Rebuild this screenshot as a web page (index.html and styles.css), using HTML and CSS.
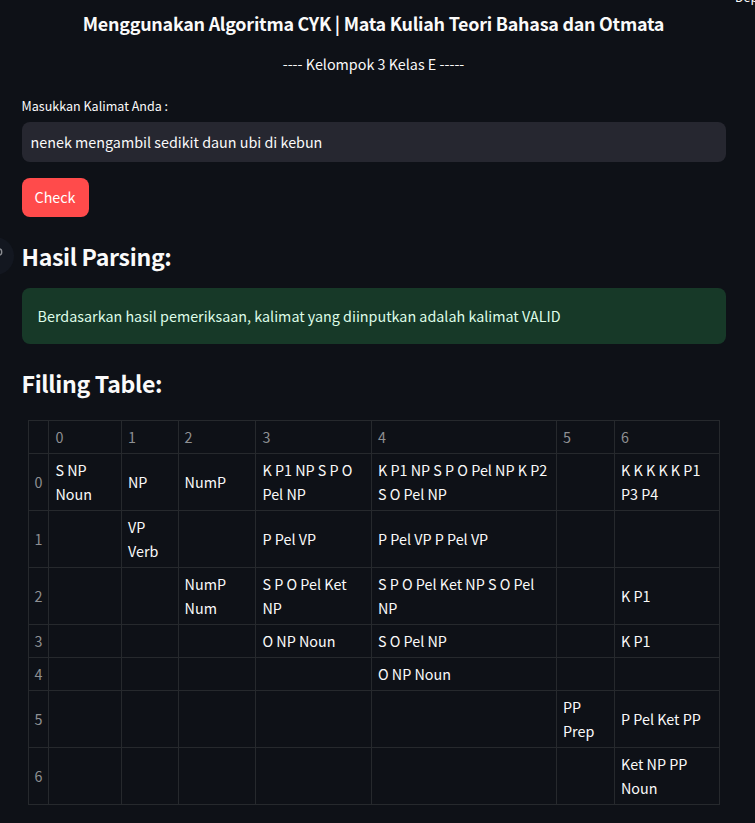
FILE: index.html
```html
<!DOCTYPE html>
<html lang="id">
<head>
<meta charset="utf-8">
<title>Algoritma CYK</title>
<link rel="stylesheet" href="styles.css">
</head>
<body>
<div class="deploy">Deploy</div>
<div class="side-toggle"><svg width="19" height="38" viewBox="0 0 19 38"><ellipse cx="-0.8" cy="15" rx="2.5" ry="3" fill="none" stroke="#8b8d92" stroke-width="1.4"/></svg></div>
<main class="page">
  <h4 class="title">Menggunakan Algoritma CYK | Mata Kuliah Teori Bahasa dan Otmata</h4>
  <p class="group">---- Kelompok 3 Kelas E -----</p>
  <label class="label" for="kalimat">Masukkan Kalimat Anda :</label>
  <input class="field" id="kalimat" type="text" value="nenek mengambil sedikit daun ubi di kebun">
  <button class="check">Check</button>
  <h3 class="heading">Hasil Parsing:</h3>
  <div class="alert">Berdasarkan hasil pemeriksaan, kalimat yang diinputkan adalah kalimat VALID</div>
  <h3 class="heading">Filling Table:</h3>
  <table class="grid">
    <colgroup><col class="c-idx"><col class="c0"><col class="c1"><col class="c2"><col class="c3"><col class="c4"><col class="c5"><col class="c6"></colgroup>
    <tr><th></th><th>0</th><th>1</th><th>2</th><th>3</th><th>4</th><th>5</th><th>6</th></tr>
    <tr><th>0</th><td>S NP<br>Noun</td><td>NP</td><td>NumP</td><td>K P1 NP S P O<br>Pel NP</td><td>K P1 NP S P O Pel NP K P2<br>S O Pel NP</td><td></td><td>K K K K K P1<br>P3 P4</td></tr>
    <tr><th>1</th><td></td><td>VP<br>Verb</td><td></td><td>P Pel VP</td><td>P Pel VP P Pel VP</td><td></td><td></td></tr>
    <tr><th>2</th><td></td><td></td><td>NumP<br>Num</td><td>S P O Pel Ket<br>NP</td><td>S P O Pel Ket NP S O Pel<br>NP</td><td></td><td>K P1</td></tr>
    <tr><th>3</th><td></td><td></td><td></td><td>O NP Noun</td><td>S O Pel NP</td><td></td><td>K P1</td></tr>
    <tr><th>4</th><td></td><td></td><td></td><td></td><td>O NP Noun</td><td></td><td></td></tr>
    <tr><th>5</th><td></td><td></td><td></td><td></td><td></td><td>PP<br>Prep</td><td>P Pel Ket PP</td></tr>
    <tr><th>6</th><td></td><td></td><td></td><td></td><td></td><td></td><td>Ket NP PP<br>Noun</td></tr>
  </table>
</main>
</body>
</html>
```
FILE: styles.css
```css
* { box-sizing: border-box; }
html { overflow: hidden; }
body {
  margin: 0;
  height: 823px;
  overflow: hidden;
  position: relative;
  background: #0e1117;
  color: #fafafa;
  font: 400 14.33px/24px "Noto Sans CJK SC", "Noto Sans", sans-serif;
}
.deploy {
  position: absolute;
  left: 735px;
  top: -14px;
  font-size: 12.54px;
  line-height: 22px;
}
.side-toggle {
  position: absolute;
  left: -24px;
  top: 237px;
  width: 38px;
  height: 38px;
  border-radius: 50%;
  background: #131720;
}
.side-toggle svg { display: block; margin-left: 24px; overflow: hidden; }
.page {
  display: flex;
  flex-direction: column;
  align-items: flex-start;
  padding: 11px 29px 0 22px;
}
.title {
  align-self: stretch;
  margin: 0 1px 0 0;
  text-align: center;
  font-size: 17.92px;
  line-height: 24px;
  font-weight: 700;
  letter-spacing: -0.245px;
  white-space: nowrap;
}
.group { align-self: stretch; margin: 17px 1px 0 0; text-align: center; }
.label { margin: 19px 0 0 -0.4px; font-size: 12.54px; line-height: 22px; }
.field {
  width: 704px;
  height: 40px;
  margin-top: 5px;
  padding: 0 9px 2px 8.6px;
  border: 0;
  border-radius: 8px;
  background: #262730;
  color: #fafafa;
  font: inherit;
  outline: none;
}
.check {
  width: 67px;
  height: 39px;
  margin-top: 16px;
  padding: 0 1px 2px 0;
  border: 0;
  border-radius: 8px;
  background: #ff4b4b;
  color: #fff;
  font: inherit;
}
.heading {
  margin: 22px 0 0 -0.5px;
  font-size: 23.1px;
  line-height: 34px;
  font-weight: 700;
  letter-spacing: -0.33px;
  white-space: nowrap;
}
.alert {
  width: 704px;
  height: 56px;
  margin-top: 15px;
  padding: 16px 15.6px;
  border-radius: 8px;
  background: #173928;
  color: #dffde9;
}
.grid {
  width: 692px;
  margin: 20px 0 0 6px;
  border-collapse: collapse;
  table-layout: fixed;
}
.grid th, .grid td {
  height: 33px;
  padding: 4px 6px;
  border: 1px solid #26292d;
  text-align: left;
  font-weight: 400;
  white-space: nowrap;
}
.grid th { color: #8e9093; }
.grid th:first-child { padding-left: 5.5px; padding-right: 5.5px; }
.grid :nth-child(2):is(th, td), .grid :nth-child(5):is(th, td) { padding-left: 6.5px; }
.grid :nth-child(4):is(th, td) { padding-left: 5.6px; }
.c-idx { width: 20px; }
.c0 { width: 73px; }
.c1 { width: 57px; }
.c2 { width: 77px; }
.c3 { width: 116px; }
.c4 { width: 185px; }
.c5 { width: 58px; }
.c6 { width: 105px; }
```
